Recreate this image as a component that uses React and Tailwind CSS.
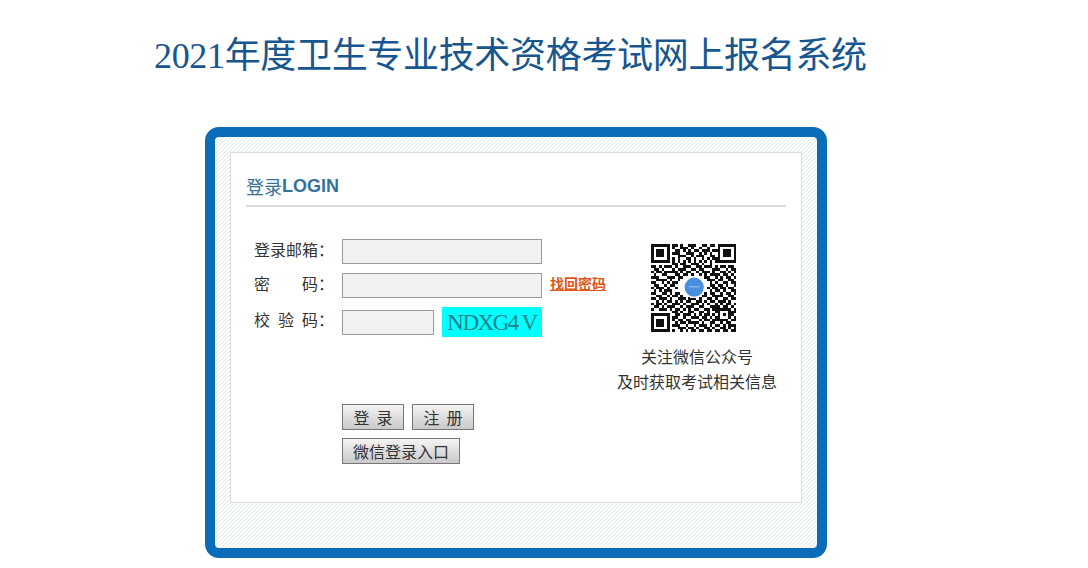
const cjk = "font-['SimSun','Liberation_Serif','Noto_Sans_CJK_SC',serif]";

// rough copy of the QR code, 33 x 33 modules
const qrRows = [
  "1111111011010011100110110 1111111",
  "1000001010011101001001000 1000001",
  "1011101001101010110111011 1011101",
  "1011101011100111001010100 1011101",
  "1011101000111001011100110 1011101",
  "1000001010100110100101011 1000001",
  "1111111010101010101010101 1111111",
  "0000000011011001110100100 0000000",
  "1101011101001110011011101 0110110",
  "0110100010111001101100011 1001011",
  "1011011111010110010111010 0110101",
  "0100110001101101001010111 1011010",
  "1110001110110000000011001 0101101",
  "0011110100100000000001110 1100110",
  "1100101011000000000000101 0011011",
  "0110010110000000000000110 1101001",
  "1011101001000000000001011 0110110",
  "0101011100000000000000101 1010011",
  "1100110101100000000010110 0101101",
  "0011001011010000000110011 1100110",
  "1101110100111011101001101 0011011",
  "0010101101010110011010110 1110100",
  "1011010011101001110101001 0101101",
  "0110101110010111001100111 1011010",
  "1001110101101010110011011 1111101",
  "0000000011010011001101001 1000111",
  "1111111001101110101011010 1010110",
  "1000001011001001110110101 1000101",
  "1011101010110110001011011 1111011",
  "1011101001011011110100110 0101100",
  "1011101011100100101110101 1010111",
  "1000001000111011010011010 0110101",
  "1111111010010101101101101 1011011",
].map((r) => r.replace(" ", ""));

function QrCode() {
  return (
    <svg className="mr-1" width="88" height="88" viewBox="0 0 33 33" shapeRendering="crispEdges">
      {qrRows.map((row, y) =>
        row.split("").map((cell, x) =>
          cell === "1" ? <rect key={x + "-" + y} x={x} y={y} width="1" height="1" fill="#111" /> : null
        )
      )}
      <circle cx="16.2" cy="16.2" r="4.2" fill="#fff" />
      <circle cx="16.2" cy="16.2" r="3.6" fill="#4a8fdc" shapeRendering="auto" />
      <rect x="14.2" y="15.9" width="4" height="0.35" fill="#a9cdf0" shapeRendering="auto" />
    </svg>
  );
}

// label chars are spread over 64px, as the page did with spaces
function FieldLabel({ chars }) {
  return (
    <div className="flex w-[88px] pb-[6px] text-base text-[#333] font-['Noto_Sans_CJK_SC',sans-serif]">
      <span className="flex w-16 justify-between">
        {chars.map((c) => (
          <span key={c}>{c}</span>
        ))}
      </span>
      <span>：</span>
    </div>
  );
}

function GrayButton({ children, className = "" }) {
  return (
    <button
      className={`h-[26px] border border-[#777] bg-gradient-to-b from-[#f4f4f4] to-[#c9c9c9] pb-px text-base leading-none text-[#333] font-['Noto_Sans_CJK_SC',sans-serif] ${className}`}
    >
      {children}
    </button>
  );
}

const inputClass = "h-[25px] border border-[#999] bg-[#f2f2f2] outline-none";

export default function App() {
  return (
    <div className="h-[568px] overflow-hidden bg-white">
      <h1 className={`pl-[154px] pt-[36px] text-[36px] font-normal leading-10 tracking-[-0.33px] whitespace-nowrap text-[#17568f] ${cjk}`}>
        2021年度卫生专业技术资格考试网上报名系统
      </h1>

      <div className="ml-[205px] mt-[51px] h-[431px] w-[622px] rounded-[14px] border-[10px] border-[#0b6dba] bg-[repeating-linear-gradient(135deg,#dfe7ee_0,#dfe7ee_1px,#ffffff_1px,#ffffff_2.83px)] p-[15px]">
        <div className="h-[351px] w-[572px] border border-[#dddddd] bg-white px-[15px]">
          <div className="flex h-[54px] items-end border-b-2 border-[#dcdcdc] pb-[7px] text-[18px] leading-6 text-[#33719a]">
            <span className="font-['Noto_Sans_CJK_SC',sans-serif]">登录</span>
            <span className="font-['Liberation_Sans',sans-serif] font-bold">LOGIN</span>
          </div>

          <div className="flex">
            <div className="w-[372px] pl-2 pt-[32px]">
              <div className="flex h-[25px] items-center">
                <FieldLabel chars={["登", "录", "邮", "箱"]} />
                <input className={`${inputClass} w-[200px]`} />
              </div>
              <div className="mt-[9px] flex h-[25px] items-center">
                <FieldLabel chars={["密", "码"]} />
                <input className={`${inputClass} w-[200px]`} />
                <a className="ml-2 pb-[5px] text-sm font-bold text-[#e0561a] underline font-['Noto_Sans_CJK_SC',sans-serif]">
                  找回密码
                </a>
              </div>
              <div className="mt-[9px] flex h-[30px] items-center">
                <FieldLabel chars={["校", "验", "码"]} />
                <input className={`${inputClass} w-[92px]`} />
                <div className="ml-2 flex h-[30px] w-[100px] items-center justify-center bg-[#00ffff] text-[23px] leading-none tracking-[-1.5px] whitespace-pre text-[#1c8088] font-['Liberation_Serif',serif]">
                  NDXG4 V
                </div>
              </div>

              <div className="ml-[88px] mt-[67px] flex gap-2">
                <GrayButton className="w-[62px]">登&nbsp;&nbsp;录</GrayButton>
                <GrayButton className="w-[62px]">注&nbsp;&nbsp;册</GrayButton>
              </div>
              <div className="ml-[88px] mt-2">
                <GrayButton className="w-[118px]">微信登录入口</GrayButton>
              </div>
            </div>

            <div className="flex w-[158px] flex-col items-center pt-[37px] text-base leading-[25px] text-[#333] font-['Noto_Sans_CJK_SC',sans-serif]">
              <QrCode />
              <p className="mt-3 whitespace-nowrap">关注微信公众号</p>
              <p className="whitespace-nowrap">及时获取考试相关信息</p>
            </div>
          </div>
        </div>
      </div>
    </div>
  );
}
